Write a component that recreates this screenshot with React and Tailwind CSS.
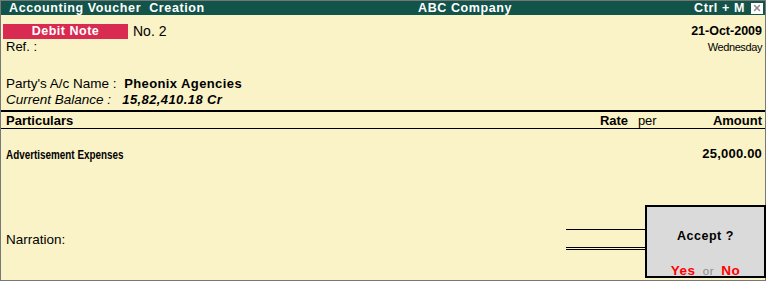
import { X } from "lucide-react"

const App = () => {
    return (
        <div className="relative w-[771px] h-[286px] bg-white font-['Liberation_Sans',Arial,sans-serif] text-black">
            <div className="flex flex-col w-[766px] h-[281px] bg-[#faf3c7] border-t border-l border-b border-r border-[#777777]">
                {/* title bar */}
                <div className="flex items-center h-[14px] bg-[#13544a] text-white font-bold text-[12.5px] tracking-[0.6px] leading-none pl-[8px] pr-[2px]">
                    <div className="w-[409px]">Accounting Voucher&nbsp; Creation</div>
                    <div className="flex-1">ABC Company</div>
                    <div className="mr-[6px]">Ctrl + M</div>
                    <div className="flex items-center justify-center w-[12px] h-[11px] bg-white">
                        <X size={10} strokeWidth={3.5} className="text-[#8a8a8a]" />
                    </div>
                </div>

                {/* voucher type + date */}
                <div className="flex mt-[9px] pl-[2px] pr-[3px]">
                    <div className="flex flex-col flex-1">
                        <div className="flex items-center">
                            <div className="flex items-center justify-center w-[125px] h-[15px] bg-[#d92a52] text-white font-bold text-[12.5px] tracking-[0.5px]">
                                Debit Note
                            </div>
                            <div className="ml-[5px] text-[14px] leading-[15px]">No. 2</div>
                        </div>
                        <div className="ml-[3px] mt-[1px] text-[13px] leading-[14px]">Ref. :</div>
                    </div>
                    <div className="flex flex-col items-end">
                        <div className="font-bold text-[12.5px] leading-[15px]">21-Oct-2009</div>
                        <div className="text-[11px] leading-[14px] tracking-[-0.4px] mt-[1px]">Wednesday</div>
                    </div>
                </div>

                {/* party */}
                <div className="flex flex-col pl-[5px] mt-[22px] text-[13.5px] leading-[16px]">
                    <div>
                        Party's A/c Name :&nbsp; <span className="font-bold text-[13px] tracking-[0.4px]">Pheonix Agencies</span>
                    </div>
                    <div className="italic">
                        Current Balance :&nbsp;&nbsp; <span className="font-bold text-[13px] tracking-[0.4px]">15,82,410.18 Cr</span>
                    </div>
                </div>

                {/* table header */}
                <div className="mt-[2px] border-t-2 border-black">
                    <div className="flex items-center h-[17px] border-b border-black pl-[5px] pr-[3px] font-bold text-[13px]">
                        <div className="flex-1 mt-[2px]">Particulars</div>
                        <div className="w-[38px] mt-[2px]">Rate</div>
                        <div className="w-[75px] mt-[2px] font-normal">per</div>
                        <div className="mt-[2px]">Amount</div>
                    </div>
                </div>

                {/* entry */}
                <div className="flex items-center mt-[13px] pl-[5px] pr-[3px] font-bold">
                    <div className="flex-1">
                        <span className="inline-block origin-left scale-x-[0.76] text-[13px]">Advertisement Expenses</span>
                    </div>
                    <div className="text-[13px] tracking-[0.2px]">25,000.00</div>
                </div>

                {/* narration + totals */}
                <div className="flex items-start mt-[59px] pl-[5px]">
                    <div className="flex-1 text-[13.5px] mt-[5px]">Narration:</div>
                    <div className="flex flex-col w-[79px] mr-[120px] mt-[4px]">
                        <div className="h-[1px] bg-black" />
                        <div className="h-[3px] border-y border-black mt-[17px]" />
                    </div>
                </div>
            </div>

            {/* accept popup */}
            <div className="absolute left-[645px] top-[205px] w-[121px] h-[73px] bg-[#dadada] border-2 border-black flex flex-col items-center">
                <div className="mt-[20px] font-bold text-[12.5px] tracking-[0.5px]">Accept ?</div>
                <div className="mt-[17px] text-[13.5px] leading-[16px] font-bold tracking-[0.6px]">
                    <span className="text-[#ff0000]">Yes</span>
                    <span className="text-[#8c8c8c] font-normal text-[11.5px] mx-[7px]">or</span>
                    <span className="text-[#ff0000]">No</span>
                </div>
            </div>
        </div>
    )
}

export default App
